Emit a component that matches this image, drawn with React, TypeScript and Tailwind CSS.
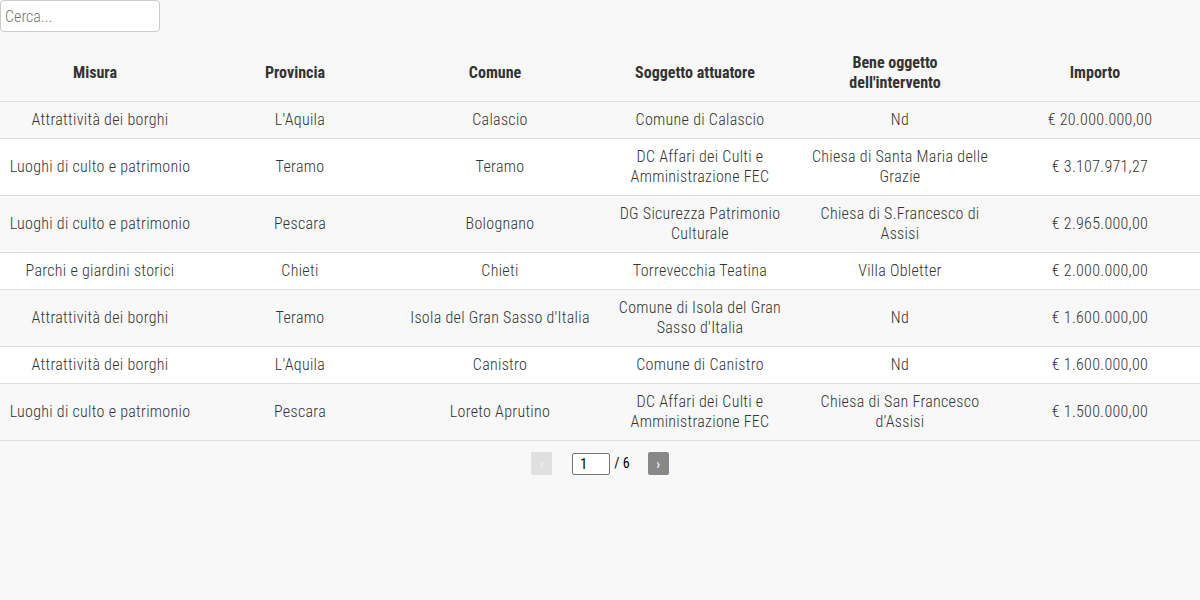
import React from "react";

const rows = [
  ["Attrattività dei borghi", "L'Aquila", "Calascio", "Comune di Calascio", "Nd", "€ 20.000.000,00"],
  ["Luoghi di culto e patrimonio", "Teramo", "Teramo", "DC Affari dei Culti e Amministrazione FEC", "Chiesa di Santa Maria delle Grazie", "€ 3.107.971,27"],
  ["Luoghi di culto e patrimonio", "Pescara", "Bolognano", "DG Sicurezza Patrimonio Culturale", "Chiesa di S.Francesco di Assisi", "€ 2.965.000,00"],
  ["Parchi e giardini storici", "Chieti", "Chieti", "Torrevecchia Teatina", "Villa Obletter", "€ 2.000.000,00"],
  ["Attrattività dei borghi", "Teramo", "Isola del Gran Sasso d'Italia", "Comune di Isola del Gran Sasso d'Italia", "Nd", "€ 1.600.000,00"],
  ["Attrattività dei borghi", "L'Aquila", "Canistro", "Comune di Canistro", "Nd", "€ 1.600.000,00"],
  ["Luoghi di culto e patrimonio", "Pescara", "Loreto Aprutino", "DC Affari dei Culti e Amministrazione FEC", "Chiesa di San Francesco d’Assisi", "€ 1.500.000,00"],
];

const headers = ["Misura", "Provincia", "Comune", "Soggetto attuatore", "Bene oggetto dell'intervento", "Importo"];

export default function App() {
  return (
    <div
      className="min-h-[600px] w-[1200px] bg-[#f8f8f8] text-[#333] font-stretch-condensed"
      style={{ fontFamily: "'Roboto Condensed', Roboto, sans-serif" }}
    >
      <input
        placeholder="Cerca..."
        className="block h-8 w-40 rounded-[4px] border border-[#ccc] bg-white px-[4px] text-[16px] font-light text-[#333] placeholder:text-[#757575] outline-none"
      />
      <table className="mt-[9px] w-[1200px] table-fixed border-collapse text-[16px] leading-5">
        <thead>
          <tr className="border-b border-[#ddd]">
            {headers.map((h) => (
              <th key={h} className="w-[200px] pt-[12px] pb-[8px] pl-[30px] pr-[40px] text-center font-bold">
                {h}
              </th>
            ))}
          </tr>
        </thead>
        <tbody>
          {rows.map((r, i) => (
            <tr key={i} className={`border-b border-[#ddd] ${i % 2 === 0 ? "bg-[#f8f8f8]" : "bg-white"}`}>
              {r.map((c, j) => (
                <td key={j} className="px-2 py-2 text-center font-[350] tracking-[0.3px]">
                  {c}
                </td>
              ))}
            </tr>
          ))}
        </tbody>
      </table>
      <div className="mt-[11px] flex items-center justify-center text-[14px]">
        <button className="h-[23px] w-[21px] rounded-[2px] bg-[#e0e0e0] text-[#f4f4f4] leading-none">‹</button>
        <input
          defaultValue="1"
          className="ml-[20px] h-[22px] w-[38px] rounded-[2px] border border-[#767676] bg-white px-[7px] text-[14px] text-black outline-none"
        />
        <span className="ml-[4px] text-black">/ 6</span>
        <button className="ml-[18px] h-[23px] w-[21px] rounded-[2px] bg-[#888] text-white leading-none">›</button>
      </div>
    </div>
  );
}
